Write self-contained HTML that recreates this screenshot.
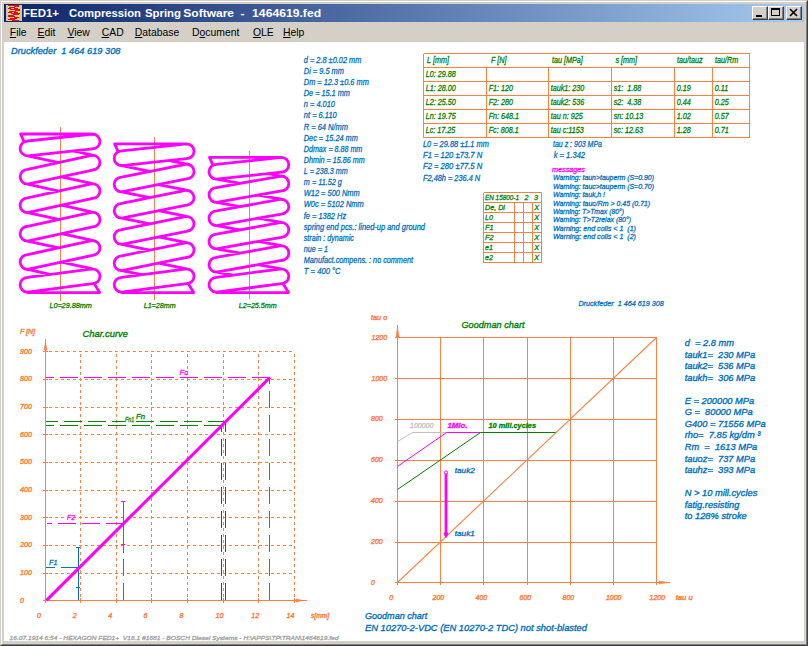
<!DOCTYPE html>
<html><head><meta charset="utf-8"><title>FED1+ Compression Spring Software - 1464619.fed</title>
<style>
html,body{margin:0;padding:0;}
body{width:808px;height:646px;background:#D4D0C8;position:relative;overflow:hidden;font-family:"Liberation Sans",sans-serif;}
.frame{position:absolute;left:0;top:0;width:806px;height:644px;border-top:1px solid #D4D0C8;border-left:1px solid #D4D0C8;border-right:1px solid #404040;border-bottom:1px solid #404040;}
.frame2{position:absolute;left:1px;top:1px;width:804px;height:642px;border-top:1px solid #fff;border-left:1px solid #fff;border-right:1px solid #808080;border-bottom:1px solid #808080;}
.title{position:absolute;left:4px;top:4px;width:800px;height:18px;background:linear-gradient(to right,#0A246A 0%,#A6CAF0 100%);}
.title .t{position:absolute;left:19.5px;top:0;height:18px;line-height:18px;color:#fff;font-weight:bold;font-size:11.9px;white-space:pre;}
.btn{position:absolute;top:2px;width:14px;height:12px;background:#D4D0C8;border-top:1px solid #fff;border-left:1px solid #fff;border-right:1px solid #404040;border-bottom:1px solid #404040;box-shadow:inset -1px -1px 0 #808080;}
.menu{position:absolute;left:4px;top:22px;width:800px;height:20px;background:#D4D0C8;font-size:10.4px;color:#000;}
.menu span{position:absolute;top:0;height:20px;line-height:21px;white-space:pre;}
.menu u{text-decoration:underline;text-underline-offset:1px;}
.client{position:absolute;left:4px;top:42px;width:800px;height:599px;background:#fff;}
svg{position:absolute;left:0;top:0;}
svg text{font-family:"Liberation Sans",sans-serif;font-style:italic;white-space:pre;}
</style></head>
<body>
<div class="frame"></div><div class="frame2"></div>
<div class="title">
<svg width="16" height="16" viewBox="0 0 16 16" style="left:2px;top:1px" shape-rendering="crispEdges"><rect x="0" y="0" width="16" height="16" fill="#FF0000"/><rect x="0" y="0" width="2" height="1" fill="#C8C8C8"/><rect x="13" y="0" width="3" height="1" fill="#C8C8C8"/><rect x="0" y="1" width="2" height="1" fill="#C8C8C8"/><rect x="2" y="1" width="1" height="1" fill="#FFFF00"/><rect x="3" y="1" width="4" height="1" fill="#B0C8D8"/><rect x="7" y="1" width="1" height="1" fill="#FFFF00"/><rect x="13" y="1" width="3" height="1" fill="#C8C8C8"/><rect x="0" y="2" width="2" height="1" fill="#C8C8C8"/><rect x="2" y="2" width="1" height="1" fill="#FFFF00"/><rect x="9" y="2" width="3" height="1" fill="#B0C8D8"/><rect x="12" y="2" width="1" height="1" fill="#FFFF00"/><rect x="13" y="2" width="3" height="1" fill="#C8C8C8"/><rect x="0" y="3" width="2" height="1" fill="#C8C8C8"/><rect x="5" y="3" width="2" height="1" fill="#B0C8D8"/><rect x="7" y="3" width="1" height="1" fill="#FFFF00"/><rect x="12" y="3" width="1" height="1" fill="#FFFF00"/><rect x="13" y="3" width="3" height="1" fill="#C8C8C8"/><rect x="0" y="4" width="2" height="1" fill="#C8C8C8"/><rect x="2" y="4" width="2" height="1" fill="#B0C8D8"/><rect x="14" y="4" width="2" height="1" fill="#C8C8C8"/><rect x="0" y="5" width="2" height="1" fill="#C8C8C8"/><rect x="2" y="5" width="1" height="1" fill="#FFFF00"/><rect x="3" y="5" width="4" height="1" fill="#B0C8D8"/><rect x="7" y="5" width="2" height="1" fill="#FFFF00"/><rect x="14" y="5" width="2" height="1" fill="#C8C8C8"/><rect x="0" y="6" width="2" height="1" fill="#C8C8C8"/><rect x="2" y="6" width="1" height="1" fill="#FFFF00"/><rect x="10" y="6" width="2" height="1" fill="#B0C8D8"/><rect x="12" y="6" width="1" height="1" fill="#FFFF00"/><rect x="13" y="6" width="3" height="1" fill="#C8C8C8"/><rect x="0" y="7" width="2" height="1" fill="#C8C8C8"/><rect x="6" y="7" width="1" height="1" fill="#B0C8D8"/><rect x="7" y="7" width="1" height="1" fill="#FFFF00"/><rect x="12" y="7" width="1" height="1" fill="#FFFF00"/><rect x="13" y="7" width="1" height="1" fill="#B0C8D8"/><rect x="14" y="7" width="2" height="1" fill="#C8C8C8"/><rect x="0" y="8" width="2" height="1" fill="#C8C8C8"/><rect x="2" y="8" width="3" height="1" fill="#B0C8D8"/><rect x="14" y="8" width="2" height="1" fill="#C8C8C8"/><rect x="0" y="9" width="2" height="1" fill="#C8C8C8"/><rect x="2" y="9" width="1" height="1" fill="#FFFF00"/><rect x="3" y="9" width="4" height="1" fill="#B0C8D8"/><rect x="13" y="9" width="3" height="1" fill="#C8C8C8"/><rect x="0" y="10" width="2" height="1" fill="#C8C8C8"/><rect x="8" y="10" width="4" height="1" fill="#B0C8D8"/><rect x="12" y="10" width="1" height="1" fill="#FFFF00"/><rect x="13" y="10" width="3" height="1" fill="#C8C8C8"/><rect x="0" y="11" width="2" height="1" fill="#C8C8C8"/><rect x="9" y="11" width="3" height="1" fill="#B0C8D8"/><rect x="12" y="11" width="1" height="1" fill="#FFFF00"/><rect x="13" y="11" width="3" height="1" fill="#C8C8C8"/><rect x="0" y="12" width="2" height="1" fill="#C8C8C8"/><rect x="2" y="12" width="1" height="1" fill="#FFFF00"/><rect x="3" y="12" width="4" height="1" fill="#B0C8D8"/><rect x="7" y="12" width="1" height="1" fill="#FFFF00"/><rect x="13" y="12" width="3" height="1" fill="#C8C8C8"/><rect x="0" y="13" width="2" height="1" fill="#C8C8C8"/><rect x="2" y="13" width="2" height="1" fill="#B0C8D8"/><rect x="11" y="13" width="1" height="1" fill="#B0C8D8"/><rect x="12" y="13" width="1" height="1" fill="#FFFF00"/><rect x="13" y="13" width="3" height="1" fill="#C8C8C8"/><rect x="0" y="14" width="2" height="1" fill="#C8C8C8"/><rect x="9" y="14" width="3" height="1" fill="#B0C8D8"/><rect x="12" y="14" width="1" height="1" fill="#FFFF00"/><rect x="13" y="14" width="3" height="1" fill="#C8C8C8"/><rect x="0" y="15" width="2" height="1" fill="#C8C8C8"/><rect x="2" y="15" width="1" height="1" fill="#FFFF00"/><rect x="3" y="15" width="3" height="1" fill="#B0C8D8"/><rect x="13" y="15" width="3" height="1" fill="#C8C8C8"/></svg>

<div class="btn" style="left:748px"><svg width="14" height="12"><rect x="3" y="8" width="6" height="2" fill="#000"/></svg></div>
<div class="btn" style="left:764px"><svg width="14" height="12"><rect x="2.5" y="1.5" width="8" height="7" fill="none" stroke="#000" stroke-width="1"/><rect x="2" y="1" width="9" height="2" fill="#000"/></svg></div>
<div class="btn" style="left:782px"><svg width="14" height="12"><path d="M3,2 L10,9 M10,2 L3,9" stroke="#000" stroke-width="1.6" fill="none"/></svg></div>
</div>
<div class="menu">
<span style="left:5.8px"><u>F</u>ile</span>
<span style="left:33.6px"><u>E</u>dit</span>
<span style="left:63.4px"><u>V</u>iew</span>
<span style="left:97.7px"><u>C</u>AD</span>
<span style="left:130.8px"><u>D</u>atabase</span>
<span style="left:188px">D<u>o</u>cument</span>
<span style="left:248.9px"><u>O</u>LE</span>
<span style="left:279px"><u>H</u>elp</span>
</div>
<div class="client"></div>
<svg width="808" height="646" viewBox="0 0 808 646">
<g>
<line x1="60.5" y1="127" x2="60.5" y2="301" stroke="#FF8040" stroke-width="1" shape-rendering="crispEdges"/>
<path d="M27.55,141.00 L92.55,134.00 A7.4,7.4 0 0 1 92.55,148.80 L27.55,155.80 A7.4,7.4 0 0 1 27.55,141.00Z M27.55,169.42 L92.55,155.21 A7.4,7.4 0 0 1 92.55,170.01 L27.55,184.22 A7.4,7.4 0 0 1 27.55,169.42Z M27.55,197.84 L92.55,183.63 A7.4,7.4 0 0 1 92.55,198.43 L27.55,212.64 A7.4,7.4 0 0 1 27.55,197.84Z M27.55,226.27 L92.55,212.06 A7.4,7.4 0 0 1 92.55,226.86 L27.55,241.07 A7.4,7.4 0 0 1 27.55,226.27Z M27.55,254.69 L92.55,240.48 A7.4,7.4 0 0 1 92.55,255.28 L27.55,269.49 A7.4,7.4 0 0 1 27.55,254.69Z M27.55,277.30 L92.55,268.90 A7.4,7.4 0 0 1 92.55,283.70 L27.55,292.10 A7.4,7.4 0 0 1 27.55,277.30Z M27.55,155.80 L58.70,162.61 M72.90,150.92 L92.55,155.21 M27.55,184.22 L58.70,191.03 M61.40,176.82 L92.55,183.63 M27.55,212.64 L58.70,219.46 M61.40,205.24 L92.55,212.06 M27.55,241.07 L58.70,247.88 M61.40,233.67 L92.55,240.48 M27.55,269.49 L50.00,274.40 M61.40,262.09 L92.55,268.90 M93.55,134.00 L20.65,134.00 L24.15,142.00 M26.55,292.60 L99.65,292.60 L94.45,284.10" fill="none" stroke="#FF00FF" stroke-width="2.8" stroke-linejoin="round"/>
<line x1="154.5" y1="137" x2="154.5" y2="300" stroke="#FF8040" stroke-width="1" shape-rendering="crispEdges"/>
<path d="M121.60,150.90 L186.60,143.90 A7.4,7.4 0 0 1 186.60,158.70 L121.60,165.70 A7.4,7.4 0 0 1 121.60,150.90Z M121.60,177.12 L186.60,164.01 A7.4,7.4 0 0 1 186.60,178.81 L121.60,191.92 A7.4,7.4 0 0 1 121.60,177.12Z M121.60,203.34 L186.60,190.23 A7.4,7.4 0 0 1 186.60,205.03 L121.60,218.14 A7.4,7.4 0 0 1 121.60,203.34Z M121.60,229.57 L186.60,216.46 A7.4,7.4 0 0 1 186.60,231.26 L121.60,244.37 A7.4,7.4 0 0 1 121.60,229.57Z M121.60,255.79 L186.60,242.68 A7.4,7.4 0 0 1 186.60,257.48 L121.60,270.59 A7.4,7.4 0 0 1 121.60,255.79Z M121.60,277.30 L186.60,268.90 A7.4,7.4 0 0 1 186.60,283.70 L121.60,292.10 A7.4,7.4 0 0 1 121.60,277.30Z M121.60,165.70 L149.91,171.41 M169.43,160.55 L186.60,164.01 M121.60,191.92 L149.91,197.63 M158.29,184.52 L186.60,190.23 M121.60,218.14 L149.91,223.86 M158.29,210.74 L186.60,216.46 M121.60,244.37 L149.91,250.08 M158.29,236.97 L186.60,242.68 M121.60,270.59 L141.88,274.68 M158.29,263.19 L186.60,268.90 M187.60,143.90 L114.70,143.90 L118.20,151.90 M120.60,292.60 L193.70,292.60 L188.50,284.10" fill="none" stroke="#FF00FF" stroke-width="2.8" stroke-linejoin="round"/>
<line x1="249.5" y1="151" x2="249.5" y2="299" stroke="#FF8040" stroke-width="1" shape-rendering="crispEdges"/>
<path d="M216.40,164.40 L281.40,157.40 A7.4,7.4 0 0 1 281.40,172.20 L216.40,179.20 A7.4,7.4 0 0 1 216.40,164.40Z M216.40,187.62 L281.40,176.01 A7.4,7.4 0 0 1 281.40,190.81 L216.40,202.42 A7.4,7.4 0 0 1 216.40,187.62Z M216.40,210.84 L281.40,199.23 A7.4,7.4 0 0 1 281.40,214.03 L216.40,225.64 A7.4,7.4 0 0 1 216.40,210.84Z M216.40,234.07 L281.40,222.46 A7.4,7.4 0 0 1 281.40,237.26 L216.40,248.87 A7.4,7.4 0 0 1 216.40,234.07Z M216.40,257.29 L281.40,245.68 A7.4,7.4 0 0 1 281.40,260.48 L216.40,272.09 A7.4,7.4 0 0 1 216.40,257.29Z M216.40,277.30 L281.40,268.90 A7.4,7.4 0 0 1 281.40,283.70 L216.40,292.10 A7.4,7.4 0 0 1 216.40,277.30Z M216.40,179.20 L239.97,183.41 M268.09,173.63 L281.40,176.01 M216.40,202.42 L239.97,206.63 M257.83,195.02 L281.40,199.23 M216.40,225.64 L239.97,229.86 M257.83,218.24 L281.40,222.46 M216.40,248.87 L239.97,253.08 M257.83,241.47 L281.40,245.68 M216.40,272.09 L233.33,275.11 M257.83,264.69 L281.40,268.90 M282.40,157.40 L209.50,157.40 L213.00,165.40 M215.40,292.60 L288.50,292.60 L283.30,284.10" fill="none" stroke="#FF00FF" stroke-width="2.8" stroke-linejoin="round"/>
</g>
<text x="49.4" y="308" font-size="7.2" fill="#008000" stroke="#008000" stroke-width="0.28" textLength="42.3" lengthAdjust="spacingAndGlyphs">L0=29.88mm</text>
<text x="143.7" y="308" font-size="7.2" fill="#008000" stroke="#008000" stroke-width="0.28" textLength="31.9" lengthAdjust="spacingAndGlyphs">L1=28mm</text>
<text x="238.8" y="308" font-size="7.2" fill="#008000" stroke="#008000" stroke-width="0.28" textLength="37.8" lengthAdjust="spacingAndGlyphs">L2=25.5mm</text>
<text x="23" y="17.2" font-size="11.7" font-weight="bold" fill="#fff" style="font-style:normal" textLength="36" lengthAdjust="spacingAndGlyphs">FED1+</text>
<text x="69" y="17.2" font-size="11.7" font-weight="bold" fill="#fff" style="font-style:normal" textLength="72" lengthAdjust="spacingAndGlyphs">Compression</text>
<text x="145" y="17.2" font-size="11.7" font-weight="bold" fill="#fff" style="font-style:normal" textLength="36" lengthAdjust="spacingAndGlyphs">Spring</text>
<text x="183.3" y="17.2" font-size="11.7" font-weight="bold" fill="#fff" style="font-style:normal" textLength="50.7" lengthAdjust="spacingAndGlyphs">Software</text>
<text x="240.4" y="17.2" font-size="11.7" font-weight="bold" fill="#fff" style="font-style:normal" textLength="4" lengthAdjust="spacingAndGlyphs">-</text>
<text x="252.1" y="17.2" font-size="11.7" font-weight="bold" fill="#fff" style="font-style:normal" textLength="69" lengthAdjust="spacingAndGlyphs">1464619.fed</text>
<text x="11" y="54" font-size="9.7" fill="#0070C0" stroke="#0070C0" stroke-width="0.35" textLength="109.5" lengthAdjust="spacingAndGlyphs" xml:space="preserve">Druckfeder  1 464 619 308</text>
<text x="303.8" y="62.8" font-size="8.3" fill="#0070C0" stroke="#0070C0" stroke-width="0.28" textLength="57.6" lengthAdjust="spacingAndGlyphs">d = 2.8 ±0.02 mm</text>
<text x="303.8" y="73.9" font-size="8.3" fill="#0070C0" stroke="#0070C0" stroke-width="0.28" textLength="40.1" lengthAdjust="spacingAndGlyphs">Di = 9.5 mm</text>
<text x="303.8" y="85.0" font-size="8.3" fill="#0070C0" stroke="#0070C0" stroke-width="0.28" textLength="65.0" lengthAdjust="spacingAndGlyphs">Dm = 12.3 ±0.6 mm</text>
<text x="303.8" y="96.2" font-size="8.3" fill="#0070C0" stroke="#0070C0" stroke-width="0.28" textLength="46.0" lengthAdjust="spacingAndGlyphs">De = 15.1 mm</text>
<text x="303.8" y="107.3" font-size="8.3" fill="#0070C0" stroke="#0070C0" stroke-width="0.28" textLength="31.2" lengthAdjust="spacingAndGlyphs">n = 4.010</text>
<text x="303.8" y="118.4" font-size="8.3" fill="#0070C0" stroke="#0070C0" stroke-width="0.28" textLength="33.0" lengthAdjust="spacingAndGlyphs">nt = 6.110</text>
<text x="303.8" y="129.5" font-size="8.3" fill="#0070C0" stroke="#0070C0" stroke-width="0.28" textLength="44.2" lengthAdjust="spacingAndGlyphs">R = 64 N/mm</text>
<text x="303.8" y="140.6" font-size="8.3" fill="#0070C0" stroke="#0070C0" stroke-width="0.28" textLength="54.0" lengthAdjust="spacingAndGlyphs">Dec = 15.24 mm</text>
<text x="303.8" y="151.8" font-size="8.3" fill="#0070C0" stroke="#0070C0" stroke-width="0.28" textLength="58.5" lengthAdjust="spacingAndGlyphs">Ddmax = 8.88 mm</text>
<text x="303.8" y="162.9" font-size="8.3" fill="#0070C0" stroke="#0070C0" stroke-width="0.28" textLength="60.9" lengthAdjust="spacingAndGlyphs">Dhmin = 15.86 mm</text>
<text x="303.8" y="174.0" font-size="8.3" fill="#0070C0" stroke="#0070C0" stroke-width="0.28" textLength="43.8" lengthAdjust="spacingAndGlyphs">L = 238.3 mm</text>
<text x="303.8" y="185.1" font-size="8.3" fill="#0070C0" stroke="#0070C0" stroke-width="0.28" textLength="38.1" lengthAdjust="spacingAndGlyphs">m = 11.52 g</text>
<text x="303.8" y="196.2" font-size="8.3" fill="#0070C0" stroke="#0070C0" stroke-width="0.28" textLength="55.9" lengthAdjust="spacingAndGlyphs">W12 = 500 Nmm</text>
<text x="303.8" y="207.4" font-size="8.3" fill="#0070C0" stroke="#0070C0" stroke-width="0.28" textLength="60.0" lengthAdjust="spacingAndGlyphs">W0c = 5102 Nmm</text>
<text x="303.8" y="218.5" font-size="8.3" fill="#0070C0" stroke="#0070C0" stroke-width="0.28" textLength="42.3" lengthAdjust="spacingAndGlyphs">fe = 1382 Hz</text>
<text x="303.8" y="229.6" font-size="8.3" fill="#0070C0" stroke="#0070C0" stroke-width="0.28" textLength="121.2" lengthAdjust="spacingAndGlyphs">spring end pcs.: lined-up and ground</text>
<text x="303.8" y="240.7" font-size="8.3" fill="#0070C0" stroke="#0070C0" stroke-width="0.28" textLength="50.1" lengthAdjust="spacingAndGlyphs">strain : dynamic</text>
<text x="303.8" y="251.8" font-size="8.3" fill="#0070C0" stroke="#0070C0" stroke-width="0.28" textLength="24.1" lengthAdjust="spacingAndGlyphs">nue = 1</text>
<text x="303.8" y="263.0" font-size="8.3" fill="#0070C0" stroke="#0070C0" stroke-width="0.28" textLength="109.2" lengthAdjust="spacingAndGlyphs">Manufact.compens. : no comment</text>
<text x="303.8" y="274.1" font-size="8.3" fill="#0070C0" stroke="#0070C0" stroke-width="0.28" textLength="36.8" lengthAdjust="spacingAndGlyphs">T = 400 °C</text>
<path d="M423.5,53.5 H749.5 M423.5,67.5 H749.5 M423.5,81.5 H749.5 M423.5,95.5 H749.5 M423.5,109.5 H749.5 M423.5,123.5 H749.5 M423.5,137.5 H749.5 M423.5,53.5 V137.5 M749.5,53.5 V137.5 M486.5,67.5 V137.5 M548.5,67.5 V137.5 M611.5,67.5 V137.5 M674.5,67.5 V137.5 M712.5,67.5 V137.5" fill="none" stroke="#FF8040" stroke-width="1" shape-rendering="crispEdges"/>
<text x="427.0" y="63.0" font-size="8.3" fill="#008000" stroke="#008000" stroke-width="0.28" textLength="21.9" lengthAdjust="spacingAndGlyphs" xml:space="preserve">L [mm]</text>
<text x="491.0" y="63.0" font-size="8.3" fill="#008000" stroke="#008000" stroke-width="0.28" textLength="15.5" lengthAdjust="spacingAndGlyphs" xml:space="preserve">F [N]</text>
<text x="552.0" y="63.0" font-size="8.3" fill="#008000" stroke="#008000" stroke-width="0.28" textLength="30.8" lengthAdjust="spacingAndGlyphs" xml:space="preserve">tau [MPa]</text>
<text x="615.5" y="63.0" font-size="8.3" fill="#008000" stroke="#008000" stroke-width="0.28" textLength="21.6" lengthAdjust="spacingAndGlyphs" xml:space="preserve">s [mm]</text>
<text x="677.0" y="63.0" font-size="8.3" fill="#008000" stroke="#008000" stroke-width="0.28" textLength="25.6" lengthAdjust="spacingAndGlyphs" xml:space="preserve">tau/tauz</text>
<text x="715.0" y="63.0" font-size="8.3" fill="#008000" stroke="#008000" stroke-width="0.28" textLength="23.2" lengthAdjust="spacingAndGlyphs" xml:space="preserve">tau/Rm</text>
<text x="425.7" y="77.0" font-size="8.3" fill="#008000" stroke="#008000" stroke-width="0.28" textLength="30.0" lengthAdjust="spacingAndGlyphs" xml:space="preserve">L0: 29.88</text>
<text x="425.7" y="91.0" font-size="8.3" fill="#008000" stroke="#008000" stroke-width="0.28" textLength="30.0" lengthAdjust="spacingAndGlyphs" xml:space="preserve">L1: 28.00</text>
<text x="488.7" y="91.0" font-size="8.3" fill="#008000" stroke="#008000" stroke-width="0.28" textLength="24.4" lengthAdjust="spacingAndGlyphs" xml:space="preserve">F1: 120</text>
<text x="550.7" y="91.0" font-size="8.3" fill="#008000" stroke="#008000" stroke-width="0.28" textLength="33.6" lengthAdjust="spacingAndGlyphs" xml:space="preserve">tauk1: 230</text>
<text x="613.7" y="91.0" font-size="8.3" fill="#008000" stroke="#008000" stroke-width="0.28" textLength="27.6" lengthAdjust="spacingAndGlyphs" xml:space="preserve">s1:  1.88</text>
<text x="676.7" y="91.0" font-size="8.3" fill="#008000" stroke="#008000" stroke-width="0.28" textLength="14.0" lengthAdjust="spacingAndGlyphs" xml:space="preserve">0.19</text>
<text x="714.7" y="91.0" font-size="8.3" fill="#008000" stroke="#008000" stroke-width="0.28" textLength="13.5" lengthAdjust="spacingAndGlyphs" xml:space="preserve">0.11</text>
<text x="425.7" y="105.0" font-size="8.3" fill="#008000" stroke="#008000" stroke-width="0.28" textLength="30.0" lengthAdjust="spacingAndGlyphs" xml:space="preserve">L2: 25.50</text>
<text x="488.7" y="105.0" font-size="8.3" fill="#008000" stroke="#008000" stroke-width="0.28" textLength="24.4" lengthAdjust="spacingAndGlyphs" xml:space="preserve">F2: 280</text>
<text x="550.7" y="105.0" font-size="8.3" fill="#008000" stroke="#008000" stroke-width="0.28" textLength="33.6" lengthAdjust="spacingAndGlyphs" xml:space="preserve">tauk2: 536</text>
<text x="613.7" y="105.0" font-size="8.3" fill="#008000" stroke="#008000" stroke-width="0.28" textLength="27.6" lengthAdjust="spacingAndGlyphs" xml:space="preserve">s2:  4.38</text>
<text x="676.7" y="105.0" font-size="8.3" fill="#008000" stroke="#008000" stroke-width="0.28" textLength="14.0" lengthAdjust="spacingAndGlyphs" xml:space="preserve">0.44</text>
<text x="714.7" y="105.0" font-size="8.3" fill="#008000" stroke="#008000" stroke-width="0.28" textLength="14.0" lengthAdjust="spacingAndGlyphs" xml:space="preserve">0.25</text>
<text x="425.7" y="119.0" font-size="8.3" fill="#008000" stroke="#008000" stroke-width="0.28" textLength="30.0" lengthAdjust="spacingAndGlyphs" xml:space="preserve">Ln: 19.75</text>
<text x="488.7" y="119.0" font-size="8.3" fill="#008000" stroke="#008000" stroke-width="0.28" textLength="30.4" lengthAdjust="spacingAndGlyphs" xml:space="preserve">Fn: 648.1</text>
<text x="550.7" y="119.0" font-size="8.3" fill="#008000" stroke="#008000" stroke-width="0.28" textLength="32.0" lengthAdjust="spacingAndGlyphs" xml:space="preserve">tau n: 925</text>
<text x="613.7" y="119.0" font-size="8.3" fill="#008000" stroke="#008000" stroke-width="0.28" textLength="29.6" lengthAdjust="spacingAndGlyphs" xml:space="preserve">sn: 10.13</text>
<text x="676.7" y="119.0" font-size="8.3" fill="#008000" stroke="#008000" stroke-width="0.28" textLength="14.0" lengthAdjust="spacingAndGlyphs" xml:space="preserve">1.02</text>
<text x="714.7" y="119.0" font-size="8.3" fill="#008000" stroke="#008000" stroke-width="0.28" textLength="14.0" lengthAdjust="spacingAndGlyphs" xml:space="preserve">0.57</text>
<text x="425.7" y="133.0" font-size="8.3" fill="#008000" stroke="#008000" stroke-width="0.28" textLength="29.6" lengthAdjust="spacingAndGlyphs" xml:space="preserve">Lc: 17.25</text>
<text x="488.7" y="133.0" font-size="8.3" fill="#008000" stroke="#008000" stroke-width="0.28" textLength="30.0" lengthAdjust="spacingAndGlyphs" xml:space="preserve">Fc: 808.1</text>
<text x="550.7" y="133.0" font-size="8.3" fill="#008000" stroke="#008000" stroke-width="0.28" textLength="33.1" lengthAdjust="spacingAndGlyphs" xml:space="preserve">tau c:1153</text>
<text x="613.7" y="133.0" font-size="8.3" fill="#008000" stroke="#008000" stroke-width="0.28" textLength="29.2" lengthAdjust="spacingAndGlyphs" xml:space="preserve">sc: 12.63</text>
<text x="676.7" y="133.0" font-size="8.3" fill="#008000" stroke="#008000" stroke-width="0.28" textLength="14.0" lengthAdjust="spacingAndGlyphs" xml:space="preserve">1.28</text>
<text x="714.7" y="133.0" font-size="8.3" fill="#008000" stroke="#008000" stroke-width="0.28" textLength="14.0" lengthAdjust="spacingAndGlyphs" xml:space="preserve">0.71</text>
<text x="423" y="147" font-size="8.3" fill="#0070C0" stroke="#0070C0" stroke-width="0.28" textLength="65.8" lengthAdjust="spacingAndGlyphs">L0 = 29.88 ±1.1 mm</text>
<text x="423" y="158" font-size="8.3" fill="#0070C0" stroke="#0070C0" stroke-width="0.28" textLength="59.2" lengthAdjust="spacingAndGlyphs">F1 = 120 ±73.7 N</text>
<text x="423" y="169" font-size="8.3" fill="#0070C0" stroke="#0070C0" stroke-width="0.28" textLength="59.2" lengthAdjust="spacingAndGlyphs">F2 = 280 ±77.5 N</text>
<text x="423" y="181" font-size="8.3" fill="#0070C0" stroke="#0070C0" stroke-width="0.28" textLength="57.2" lengthAdjust="spacingAndGlyphs">F2,48h = 236.4 N</text>
<text x="553" y="147" font-size="8.3" fill="#0070C0" stroke="#0070C0" stroke-width="0.28" textLength="49" lengthAdjust="spacingAndGlyphs">tau z : 903 MPa</text>
<text x="553.7" y="158" font-size="8.3" fill="#0070C0" stroke="#0070C0" stroke-width="0.28" textLength="31.4" lengthAdjust="spacingAndGlyphs">k = 1.342</text>
<text x="552" y="172" font-size="7.2" fill="#FF00FF" stroke="#FF00FF" stroke-width="0.28" textLength="33" lengthAdjust="spacingAndGlyphs">messages</text>
<text x="553" y="180.1" font-size="7.0" fill="#0070C0" stroke="#0070C0" stroke-width="0.28" textLength="101" lengthAdjust="spacingAndGlyphs" xml:space="preserve">Warning: taun&gt;tauperm (S=0.90)</text>
<text x="553" y="189.0" font-size="7.0" fill="#0070C0" stroke="#0070C0" stroke-width="0.28" textLength="101" lengthAdjust="spacingAndGlyphs" xml:space="preserve">Warning: tauc&gt;tauperm (S=0.70)</text>
<text x="553" y="197.2" font-size="7.0" fill="#0070C0" stroke="#0070C0" stroke-width="0.28" textLength="52" lengthAdjust="spacingAndGlyphs" xml:space="preserve">Warning: tauk,h !</text>
<text x="553" y="206.2" font-size="7.0" fill="#0070C0" stroke="#0070C0" stroke-width="0.28" textLength="97.2" lengthAdjust="spacingAndGlyphs" xml:space="preserve">Warning: tauc/Rm &gt; 0.45 (0.71)</text>
<text x="553" y="213.7" font-size="7.0" fill="#0070C0" stroke="#0070C0" stroke-width="0.28" textLength="71" lengthAdjust="spacingAndGlyphs" xml:space="preserve">Warning: T&gt;Tmax (80°)</text>
<text x="553" y="222.0" font-size="7.0" fill="#0070C0" stroke="#0070C0" stroke-width="0.28" textLength="78" lengthAdjust="spacingAndGlyphs" xml:space="preserve">Warning: T&gt;T2relax (80°)</text>
<text x="553" y="231.2" font-size="7.0" fill="#0070C0" stroke="#0070C0" stroke-width="0.28" textLength="83" lengthAdjust="spacingAndGlyphs" xml:space="preserve">Warning: end coils &lt; 1  (1)</text>
<text x="553" y="239.4" font-size="7.0" fill="#0070C0" stroke="#0070C0" stroke-width="0.28" textLength="83" lengthAdjust="spacingAndGlyphs" xml:space="preserve">Warning: end coils &lt; 1  (2)</text>
<path d="M483.5,192.5 H541.5 M483.5,202.5 H541.5 M483.5,212.5 H541.5 M483.5,222.5 H541.5 M483.5,232.5 H541.5 M483.5,242.5 H541.5 M483.5,252.5 H541.5 M483.5,262.5 H541.5 M483.5,192.5 V262.5 M541.5,192.5 V262.5 M514.5,202.5 V262.5 M523.5,202.5 V262.5 M532.5,202.5 V262.5" fill="none" stroke="#FF8040" stroke-width="1" shape-rendering="crispEdges"/>
<text x="485" y="200.2" font-size="7.2" fill="#008000" stroke="#008000" stroke-width="0.28" textLength="34" lengthAdjust="spacingAndGlyphs">EN 15800-1</text>
<text x="524.5" y="200.2" font-size="7.2" fill="#008000" stroke="#008000" stroke-width="0.28">2</text>
<text x="534" y="200.2" font-size="7.2" fill="#008000" stroke="#008000" stroke-width="0.28">3</text>
<text x="485" y="210.3" font-size="7.2" fill="#008000" stroke="#008000" stroke-width="0.28">De, Di</text>
<text x="534.3" y="210.3" font-size="7.2" fill="#008000" stroke="#008000" stroke-width="0.28">X</text>
<text x="485" y="220.3" font-size="7.2" fill="#008000" stroke="#008000" stroke-width="0.28">L0</text>
<text x="534.3" y="220.3" font-size="7.2" fill="#008000" stroke="#008000" stroke-width="0.28">X</text>
<text x="485" y="230.3" font-size="7.2" fill="#008000" stroke="#008000" stroke-width="0.28">F1</text>
<text x="534.3" y="230.3" font-size="7.2" fill="#008000" stroke="#008000" stroke-width="0.28">X</text>
<text x="485" y="240.3" font-size="7.2" fill="#008000" stroke="#008000" stroke-width="0.28">F2</text>
<text x="534.3" y="240.3" font-size="7.2" fill="#008000" stroke="#008000" stroke-width="0.28">X</text>
<text x="485" y="250.3" font-size="7.2" fill="#008000" stroke="#008000" stroke-width="0.28">e1</text>
<text x="534.3" y="250.3" font-size="7.2" fill="#008000" stroke="#008000" stroke-width="0.28">X</text>
<text x="485" y="260.3" font-size="7.2" fill="#008000" stroke="#008000" stroke-width="0.28">e2</text>
<text x="534.3" y="260.3" font-size="7.2" fill="#008000" stroke="#008000" stroke-width="0.28">X</text>
<path d="M49.0,573.5 H295.0 M49.0,545.5 H295.0 M49.0,517.5 H295.0 M49.0,490.5 H295.0 M49.0,462.5 H295.0 M49.0,434.5 H295.0 M49.0,407.5 H295.0 M49.0,379.5 H295.0 M49.0,351.5 H295.0 M80.5,597.0 V351.0 M116.5,597.0 V351.0 M151.5,597.0 V351.0 M187.5,597.0 V351.0 M223.5,597.0 V351.0 M258.5,597.0 V351.0 M294.5,597.0 V351.0" fill="none" stroke="#FF8040" stroke-width="1" stroke-dasharray="3 3" shape-rendering="crispEdges"/>
<path d="M45.5,603.0 V339 M43.0,600.5 H307 M43.0,573.5 H48.0 M43.0,545.5 H48.0 M43.0,517.5 H48.0 M43.0,490.5 H48.0 M43.0,462.5 H48.0 M43.0,434.5 H48.0 M43.0,407.5 H48.0 M43.0,379.5 H48.0 M43.0,351.5 H48.0 M80.5,598.0 V603.0 M116.5,598.0 V603.0 M151.5,598.0 V603.0 M187.5,598.0 V603.0 M223.5,598.0 V603.0 M258.5,598.0 V603.0 M294.5,598.0 V603.0" fill="none" stroke="#FF8040" stroke-width="1" shape-rendering="crispEdges"/>
<path d="M45.5,342.5 L44,350 H47Z" fill="#FF8040" stroke="#FF8040" stroke-width="0.6"/>
<path d="M303.5,600.5 L296,599 V602Z" fill="#FF8040" stroke="#FF8040" stroke-width="0.6"/>
<text x="20" y="603" font-size="7.1" fill="#FF8040" stroke="#FF8040" stroke-width="0.4">0</text>
<text x="20" y="575" font-size="7.1" fill="#FF8040" stroke="#FF8040" stroke-width="0.4">100</text>
<text x="20" y="547" font-size="7.1" fill="#FF8040" stroke="#FF8040" stroke-width="0.4">200</text>
<text x="20" y="520" font-size="7.1" fill="#FF8040" stroke="#FF8040" stroke-width="0.4">300</text>
<text x="20" y="492" font-size="7.1" fill="#FF8040" stroke="#FF8040" stroke-width="0.4">400</text>
<text x="20" y="464" font-size="7.1" fill="#FF8040" stroke="#FF8040" stroke-width="0.4">500</text>
<text x="20" y="437" font-size="7.1" fill="#FF8040" stroke="#FF8040" stroke-width="0.4">600</text>
<text x="20" y="409" font-size="7.1" fill="#FF8040" stroke="#FF8040" stroke-width="0.4">700</text>
<text x="20" y="381" font-size="7.1" fill="#FF8040" stroke="#FF8040" stroke-width="0.4">800</text>
<text x="20" y="354" font-size="7.1" fill="#FF8040" stroke="#FF8040" stroke-width="0.4">900</text>
<text x="36.9" y="618" font-size="7.1" fill="#FF8040" stroke="#FF8040" stroke-width="0.4">0</text>
<text x="72.8" y="618" font-size="7.1" fill="#FF8040" stroke="#FF8040" stroke-width="0.4">2</text>
<text x="108.2" y="618" font-size="7.1" fill="#FF8040" stroke="#FF8040" stroke-width="0.4">4</text>
<text x="143.6" y="618" font-size="7.1" fill="#FF8040" stroke="#FF8040" stroke-width="0.4">6</text>
<text x="179.4" y="618" font-size="7.1" fill="#FF8040" stroke="#FF8040" stroke-width="0.4">8</text>
<text x="215.6" y="618" font-size="7.1" fill="#FF8040" stroke="#FF8040" stroke-width="0.4">10</text>
<text x="251.3" y="618" font-size="7.1" fill="#FF8040" stroke="#FF8040" stroke-width="0.4">12</text>
<text x="286.6" y="618" font-size="7.1" fill="#FF8040" stroke="#FF8040" stroke-width="0.4">14</text>
<text x="20" y="334" font-size="7.1" fill="#FF8040" stroke="#FF8040" stroke-width="0.4" textLength="15" lengthAdjust="spacingAndGlyphs">F [N]</text>
<text x="311" y="618" font-size="7.1" fill="#FF8040" stroke="#FF8040" stroke-width="0.4" textLength="18" lengthAdjust="spacingAndGlyphs">s[mm]</text>
<text x="82.5" y="337" font-size="9.3" fill="#008000" stroke="#008000" stroke-width="0.35" textLength="45.5" lengthAdjust="spacingAndGlyphs">Char.curve</text>
<path d="M46,377.5 H270" fill="none" stroke="#FF00FF" stroke-width="1" stroke-dasharray="18 6" stroke-dashoffset="10" shape-rendering="crispEdges"/>
<path d="M269.5,600 V377" fill="none" stroke="#FF00FF" stroke-width="1" stroke-dasharray="17.5 6.5" shape-rendering="crispEdges"/>
<text x="179.5" y="375" font-size="7.1" fill="#FF00FF" stroke="#FF00FF" stroke-width="0.28" textLength="8.5" lengthAdjust="spacingAndGlyphs">Fc</text>
<path d="M46,421.5 H226" fill="none" stroke="#008000" stroke-width="1" stroke-dasharray="18 6" stroke-dashoffset="6" shape-rendering="crispEdges"/>
<path d="M225.5,600 V421" fill="none" stroke="#008000" stroke-width="1" stroke-dasharray="17.5 6.5" shape-rendering="crispEdges"/>
<path d="M46,425.5 H222" fill="none" stroke="#008000" stroke-width="1" stroke-dasharray="18 6" stroke-dashoffset="10" shape-rendering="crispEdges"/>
<path d="M221.5,600 V425" fill="none" stroke="#008000" stroke-width="1" stroke-dasharray="17.5 6.5" shape-rendering="crispEdges"/>
<rect x="125" y="416" width="9.5" height="6.5" fill="#fff"/>
<text x="125" y="422" font-size="7.1" fill="#008000" stroke="#008000" stroke-width="0.28" textLength="9.2" lengthAdjust="spacingAndGlyphs">Fn1</text>
<text x="136" y="419" font-size="7.1" fill="#008000" stroke="#008000" stroke-width="0.28" textLength="9" lengthAdjust="spacingAndGlyphs">Fn</text>
<path d="M46.5,523.5 H123.5" fill="none" stroke="#FF00FF" stroke-width="1" stroke-dasharray="18 6" stroke-dashoffset="13" shape-rendering="crispEdges"/>
<path d="M123.5,501 V552.5 M121,501.5 h4 M121,544.5 h4" fill="none" stroke="#FF00FF" stroke-width="1" shape-rendering="crispEdges"/>
<path d="M123.5,600 V559" fill="none" stroke="#FF00FF" stroke-width="1" stroke-dasharray="17.5 6.5" shape-rendering="crispEdges"/>
<text x="67" y="520" font-size="7.1" fill="#FF00FF" stroke="#FF00FF" stroke-width="0.28" textLength="8" lengthAdjust="spacingAndGlyphs">F2</text>
<path d="M46,567.5 H55 M61,567.5 H78" fill="none" stroke="#0070C0" stroke-width="1" shape-rendering="crispEdges"/>
<path d="M78.5,547 V600 M76,547.5 h4 M76,587.5 h4" fill="none" stroke="#0070C0" stroke-width="1" shape-rendering="crispEdges"/>
<text x="49" y="565" font-size="7.1" fill="#0070C0" stroke="#0070C0" stroke-width="0.28" textLength="8.4" lengthAdjust="spacingAndGlyphs">F1</text>
<path d="M46.5,600.4 L270.1,377.3" stroke="#FF00FF" stroke-width="3.0" fill="none"/>
<path d="M395,582.5 H657 M397.5,585 V337 M395,542.5 H657 M440.5,585 V337 M395,501.5 H657 M483.5,585 V337 M395,460.5 H657 M527.5,585 V337 M395,419.5 H657 M570.5,585 V337 M395,378.5 H657 M613.5,585 V337 M395,337.5 H657 M656.5,585 V337 M397.5,585 V325 M395,582.5 H670" fill="none" stroke="#FF8040" stroke-width="1" shape-rendering="crispEdges"/>
<path d="M397.5,582.5 L656.5,337.5" fill="none" stroke="#FF8040" stroke-width="1.1"/>
<path d="M397.5,327.5 L396,337 H399.2Z" fill="#FF8040" stroke="#FF8040" stroke-width="0.6"/>
<path d="M668,582.5 L659,581 V584Z" fill="#FF8040" stroke="#FF8040" stroke-width="0.6"/>
<path d="M397.6,441.5 L412.5,432.5 H446.6" fill="none" stroke="#C0C0C0" stroke-width="1"/>
<path d="M397.6,466.4 L446.6,432.5 H480.5" fill="none" stroke="#FF00FF" stroke-width="1"/>
<path d="M397.6,489.4 L480.5,432.5 H555.5" fill="none" stroke="#008000" stroke-width="1"/>
<path d="M446,472.5 V536" fill="none" stroke="#FF00FF" stroke-width="2.8"/>
<circle cx="446" cy="472.5" r="1.6" fill="#fff" stroke="#FF00FF" stroke-width="1"/>
<path d="M444,533 L446,537.5 L448,533Z" fill="#FF00FF" stroke="#FF00FF" stroke-width="1"/>
<text x="454.8" y="473.2" font-size="6.8" fill="#0070C0" stroke="#0070C0" stroke-width="0.28" textLength="20" lengthAdjust="spacingAndGlyphs">tauk2</text>
<text x="454.8" y="536.2" font-size="6.8" fill="#0070C0" stroke="#0070C0" stroke-width="0.28" textLength="20" lengthAdjust="spacingAndGlyphs">tauk1</text>
<text x="410" y="428" font-size="7.0" fill="#C0C0C0" stroke="#C0C0C0" stroke-width="0.28" textLength="23.3" lengthAdjust="spacingAndGlyphs">100000</text>
<text x="447.5" y="428" font-size="6.8" fill="#FF00FF" stroke="#FF00FF" stroke-width="0.28" textLength="20" lengthAdjust="spacingAndGlyphs" font-weight="bold">1Mio.</text>
<text x="488.5" y="428" font-size="6.8" fill="#008000" stroke="#008000" stroke-width="0.28" textLength="47.5" lengthAdjust="spacingAndGlyphs" font-weight="bold">10 mill.cycles</text>
<text x="461.5" y="328" font-size="9.3" fill="#008000" stroke="#008000" stroke-width="0.35" textLength="63" lengthAdjust="spacingAndGlyphs">Goodman chart</text>
<text x="371" y="320" font-size="7.0" fill="#FF8040" stroke="#FF8040" stroke-width="0.4" textLength="16.2" lengthAdjust="spacingAndGlyphs">tau o</text>
<text x="371" y="585" font-size="7.0" fill="#FF8040" stroke="#FF8040" stroke-width="0.4">0</text>
<text x="389.2" y="600" font-size="7.0" fill="#FF8040" stroke="#FF8040" stroke-width="0.4">0</text>
<text x="371" y="544" font-size="7.0" fill="#FF8040" stroke="#FF8040" stroke-width="0.4">200</text>
<text x="432.5" y="600" font-size="7.0" fill="#FF8040" stroke="#FF8040" stroke-width="0.4">200</text>
<text x="371" y="503" font-size="7.0" fill="#FF8040" stroke="#FF8040" stroke-width="0.4">400</text>
<text x="475.5" y="600" font-size="7.0" fill="#FF8040" stroke="#FF8040" stroke-width="0.4">400</text>
<text x="371" y="462" font-size="7.0" fill="#FF8040" stroke="#FF8040" stroke-width="0.4">600</text>
<text x="519.5" y="600" font-size="7.0" fill="#FF8040" stroke="#FF8040" stroke-width="0.4">600</text>
<text x="371" y="421" font-size="7.0" fill="#FF8040" stroke="#FF8040" stroke-width="0.4">800</text>
<text x="562.5" y="600" font-size="7.0" fill="#FF8040" stroke="#FF8040" stroke-width="0.4">800</text>
<text x="371.5" y="381" font-size="7.0" fill="#FF8040" stroke="#FF8040" stroke-width="0.4">1000</text>
<text x="605.9" y="600" font-size="7.0" fill="#FF8040" stroke="#FF8040" stroke-width="0.4">1000</text>
<text x="371.5" y="340" font-size="7.0" fill="#FF8040" stroke="#FF8040" stroke-width="0.4">1200</text>
<text x="649.5" y="600" font-size="7.0" fill="#FF8040" stroke="#FF8040" stroke-width="0.4">1200</text>
<text x="675.7" y="600" font-size="7.0" fill="#FF8040" stroke="#FF8040" stroke-width="0.4" textLength="17" lengthAdjust="spacingAndGlyphs">tau u</text>
<text x="578.4" y="305.5" font-size="7.3" fill="#0070C0" stroke="#0070C0" stroke-width="0.28" textLength="85.4" lengthAdjust="spacingAndGlyphs" xml:space="preserve">Druckfeder  1 464 619 308</text>
<text x="684.7" y="346.1" font-size="9.3" fill="#0070C0" stroke="#0070C0" stroke-width="0.35" xml:space="preserve">d  = 2.8 mm</text>
<text x="684.7" y="358.0" font-size="9.3" fill="#0070C0" stroke="#0070C0" stroke-width="0.35" xml:space="preserve">tauk1=  230 MPa</text>
<text x="684.7" y="369.2" font-size="9.3" fill="#0070C0" stroke="#0070C0" stroke-width="0.35" xml:space="preserve">tauk2=  536 MPa</text>
<text x="684.7" y="381.2" font-size="9.3" fill="#0070C0" stroke="#0070C0" stroke-width="0.35" xml:space="preserve">taukh=  306 MPa</text>
<text x="684.7" y="403.9" font-size="9.3" fill="#0070C0" stroke="#0070C0" stroke-width="0.35" xml:space="preserve">E = 200000 MPa</text>
<text x="684.7" y="415.0" font-size="9.3" fill="#0070C0" stroke="#0070C0" stroke-width="0.35" xml:space="preserve">G =  80000 MPa</text>
<text x="684.7" y="426.6" font-size="9.3" fill="#0070C0" stroke="#0070C0" stroke-width="0.35" xml:space="preserve">G400 = 71556 MPa</text>
<text x="684.7" y="438.3" font-size="9.3" fill="#0070C0" stroke="#0070C0" stroke-width="0.35" xml:space="preserve">rho=  7.85 kg/dm ³</text>
<text x="684.7" y="450.4" font-size="9.3" fill="#0070C0" stroke="#0070C0" stroke-width="0.35" xml:space="preserve">Rm  =  1613 MPa</text>
<text x="684.7" y="461.6" font-size="9.3" fill="#0070C0" stroke="#0070C0" stroke-width="0.35" xml:space="preserve">tauoz=  737 MPa</text>
<text x="684.7" y="472.9" font-size="9.3" fill="#0070C0" stroke="#0070C0" stroke-width="0.35" xml:space="preserve">tauhz=  393 MPa</text>
<text x="684.7" y="496.1" font-size="9.3" fill="#0070C0" stroke="#0070C0" stroke-width="0.35" xml:space="preserve">N &gt; 10 mill.cycles</text>
<text x="684.7" y="508.1" font-size="9.3" fill="#0070C0" stroke="#0070C0" stroke-width="0.35" xml:space="preserve">fatig.resisting</text>
<text x="684.7" y="519.1" font-size="9.3" fill="#0070C0" stroke="#0070C0" stroke-width="0.35" xml:space="preserve">to 128% stroke</text>
<text x="365" y="619" font-size="9.3" fill="#0070C0" stroke="#0070C0" stroke-width="0.35" textLength="62.3" lengthAdjust="spacingAndGlyphs">Goodman chart</text>
<text x="365" y="631" font-size="9.3" fill="#0070C0" stroke="#0070C0" stroke-width="0.35" textLength="222" lengthAdjust="spacingAndGlyphs">EN 10270-2-VDC (EN 10270-2 TDC) not shot-blasted</text>
<text x="9.5" y="639.6" font-size="5.9" fill="#A0A0A0" stroke="#A0A0A0" stroke-width="0.28" textLength="329" lengthAdjust="spacingAndGlyphs" xml:space="preserve">16.07.1914 6:54 - HEXAGON FED1+  V16.1 #1681 - BOSCH Diesel Systems - H:\APPS\TP\TRAN\1464619.fed</text>
</svg>
</body></html>
